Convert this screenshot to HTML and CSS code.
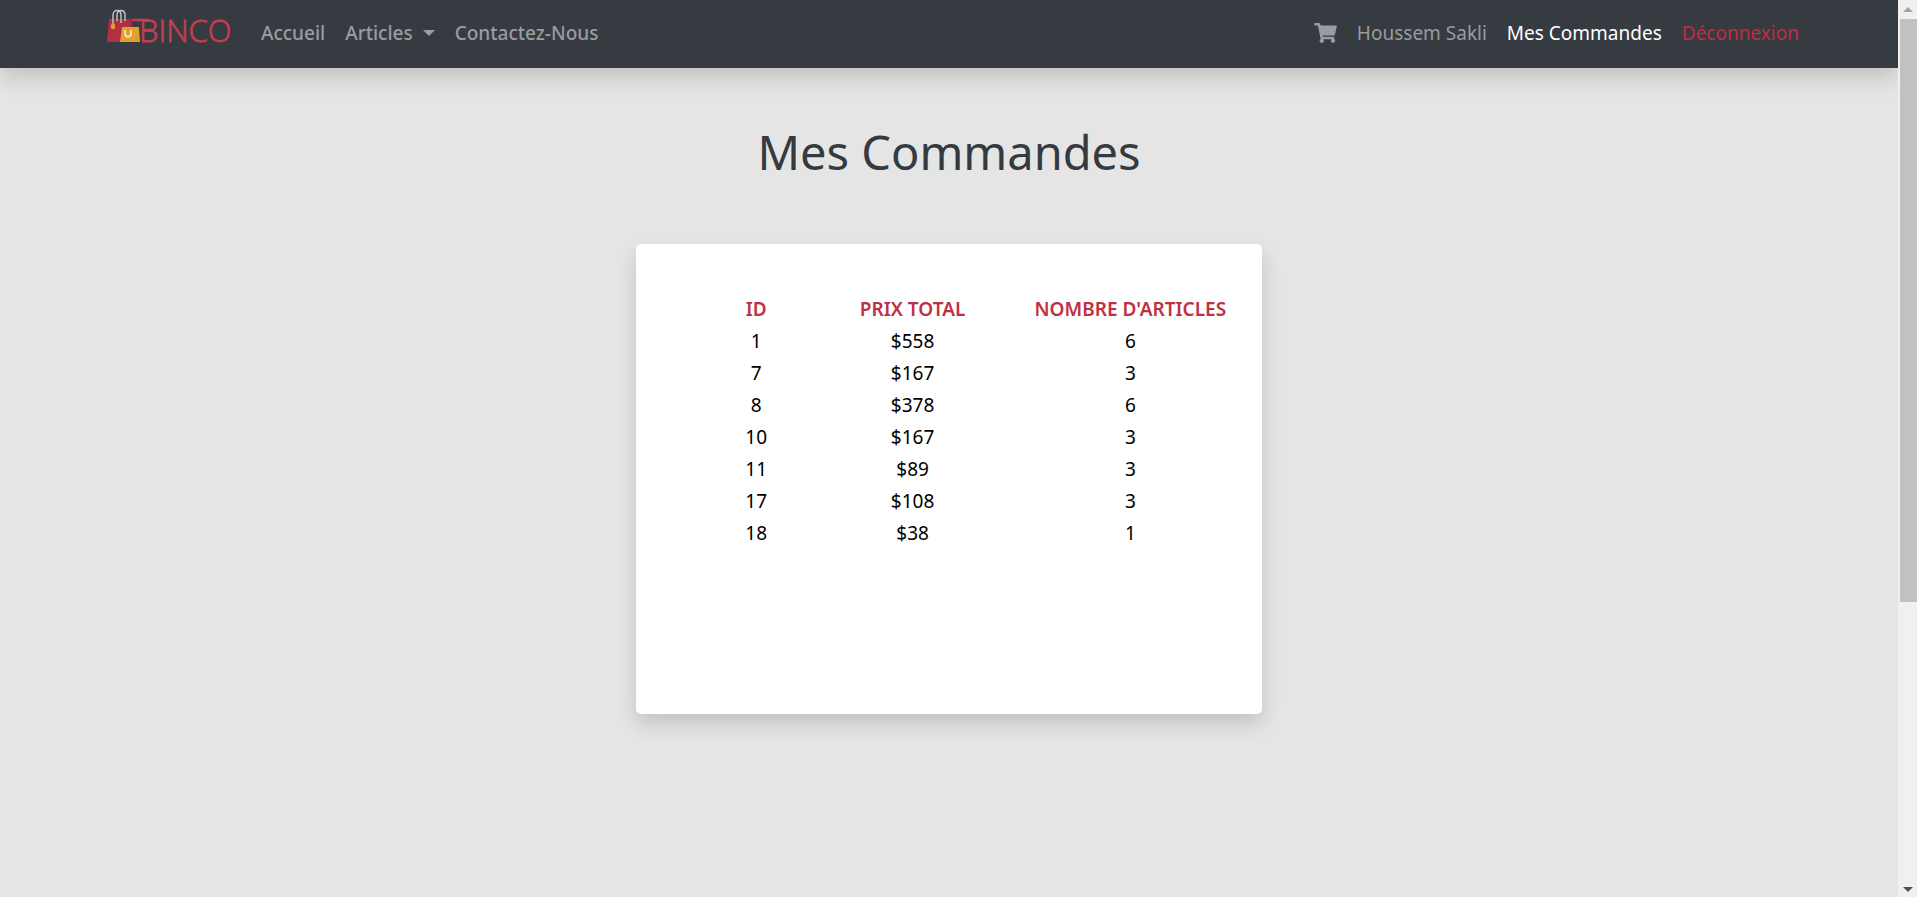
FILE: index.html
```html
<!DOCTYPE html>
<html lang="fr">
<head>
<meta charset="utf-8">
<title>Mes Commandes - Binco</title>
<link rel="stylesheet" href="styles.css">
</head>
<body>
<div class="page">
  <header class="navbar">
    <a class="brand" href="#" aria-label="Binco">
      <svg class="brand-logo" width="134" height="48" viewBox="0 0 134 48">
        <path class="bag-red" d="M2 11h22v23H0z"/>
        <path class="bag-stripe" d="M22 11v9M25 11v9"/>
        <path class="bag-handle" d="M6 16V7c0-6 8-6 8 0v8M10 13V7c0-6 8-6 8 0v6"/>
        <rect class="bag-yellow" x="4" y="16" width="4" height="5" rx="1"/>
        <path class="bag-yellow" d="M15 19h17l1 15H13z"/>
        <path class="bag-mark" d="M18 22v3c0 5 6 5 6 0v-3"/>
        <path class="brand-bar" d="M25 12h17M36 22h9"/>
        <text class="brand-text" x="32" y="34">BINCO</text>
      </svg>
    </a>
    <nav class="nav nav-main">
      <a class="nav-link" href="#">Accueil</a>
      <a class="nav-link" href="#">Articles<span class="caret"></span></a>
      <a class="nav-link" href="#">Contactez-Nous</a>
    </nav>
    <nav class="nav nav-user">
      <a class="nav-link cart-link" href="#" aria-label="Panier">
        <svg class="cart" width="23" height="20" viewBox="0 0 576 512"><path d="M528.12 301.319l47.273-208C578.806 78.301 567.391 64 551.99 64H159.208l-9.166-44.81C147.758 8.021 137.93 0 126.529 0H24C10.745 0 0 10.745 0 24v16c0 13.255 10.745 24 24 24h69.883l70.248 343.435C147.325 417.1 136 435.222 136 456c0 30.928 25.072 56 56 56s56-25.072 56-56c0-15.674-6.447-29.835-16.824-40h209.647C430.447 426.165 424 440.326 424 456c0 30.928 25.072 56 56 56s56-25.072 56-56c0-22.172-12.888-41.332-31.579-50.405l5.517-24.276c3.413-15.018-8.002-29.319-23.403-29.319H218.117l-6.545-32h293.145c11.206 0 20.92-7.754 23.403-18.681z"/></svg>
      </a>
      <a class="nav-link" href="#">Houssem Sakli</a>
      <a class="nav-link active" href="#">Mes Commandes</a>
      <a class="nav-link logout" href="#">Déconnexion</a>
    </nav>
  </header>
  <main class="content">
    <h1 class="title">Mes Commandes</h1>
    <section class="card">
      <table class="orders">
        <thead>
          <tr><th class="col-id">ID</th><th class="col-total">PRIX TOTAL</th><th class="col-count">NOMBRE D'ARTICLES</th></tr>
        </thead>
        <tbody>
          <tr><td>1</td><td>$558</td><td>6</td></tr>
          <tr><td>7</td><td>$167</td><td>3</td></tr>
          <tr><td>8</td><td>$378</td><td>6</td></tr>
          <tr><td>10</td><td>$167</td><td>3</td></tr>
          <tr><td>11</td><td>$89</td><td>3</td></tr>
          <tr><td>17</td><td>$108</td><td>3</td></tr>
          <tr><td>18</td><td>$38</td><td>1</td></tr>
        </tbody>
      </table>
    </section>
  </main>
</div>
<div class="scrollbar" aria-hidden="true">
  <span class="arrow arrow-up"></span>
  <div class="track"><div class="thumb"></div></div>
  <span class="arrow arrow-down"></span>
</div>
</body>
</html>
```

FILE: styles.css
```css
* {
  box-sizing: border-box;
}

body {
  margin: 0;
  height: 100vh;
  display: grid;
  grid-template-columns: 1fr 19px;
  overflow: hidden;
  background: #e5e5e5;
  color: #000;
  font-family: "Noto Sans", sans-serif;
  font-size: 19px;
  line-height: 30px;
}

.page {
  overflow: hidden;
}

.navbar {
  display: flex;
  align-items: center;
  height: 68px;
  padding: 0 89px 0 107px;
  background: #363a41;
  box-shadow: 0 10px 20px rgba(0, 0, 0, 0.15);
}

.brand {
  display: flex;
  margin-right: 10px;
  padding-bottom: 4px;
}

.bag-red {
  fill: #b52f42;
}

.bag-stripe {
  fill: none;
  stroke: #963244;
  stroke-width: 1;
}

.bag-handle,
.bag-mark {
  fill: none;
  stroke: #c3c5c8;
  stroke-width: 1.4;
}

.bag-mark {
  stroke: #f0e0b8;
  stroke-width: 2;
}

.bag-yellow {
  fill: #e2a02c;
}

.brand-bar {
  fill: none;
  stroke: #c63d50;
  stroke-width: 2.6;
}

.brand-text {
  fill: #c63d50;
  stroke: #c63d50;
  stroke-width: 0.8;
  font-family: "Open Sans", sans-serif;
  font-size: 31px;
  font-weight: 300;
}

.nav {
  display: flex;
  align-items: center;
}

.nav-main {
  font-weight: 500;
}

.nav-user {
  margin-left: auto;
}

.nav-link {
  display: flex;
  align-items: center;
  padding: 0 10px 2px;
  color: #9a9c9f;
  text-decoration: none;
}

.caret {
  margin-left: 10px;
  border: 6px solid transparent;
  border-top-color: currentColor;
  border-bottom: 0;
}

.cart {
  fill: currentColor;
}

.active {
  color: #fff;
}

.logout {
  color: #c22c43;
}

.content {
  display: flex;
  flex-direction: column;
  align-items: center;
  padding-top: 54px;
}

.title {
  margin: 0 0 62px;
  color: #343a40;
  font-size: 47px;
  font-weight: 400;
  line-height: 60px;
}

.card {
  width: 33%;
  min-height: 470px;
  padding: 49px 9px 49px 59px;
  border-radius: 5px;
  background: #fff;
  box-shadow: 0 10px 20px rgba(0, 0, 0, 0.15);
}

.orders {
  width: 100%;
  table-layout: fixed;
  border-collapse: collapse;
  text-align: center;
}

.orders th,
.orders td {
  padding: 1px 0;
}

.orders th {
  color: #bf3044;
  font-weight: 600;
}

.col-id {
  width: 22%;
}

.col-total {
  width: 34%;
}

.col-count {
  width: 44%;
}

.scrollbar {
  display: flex;
  flex-direction: column;
  align-items: center;
  padding: 7px 0 5px;
  background: #f0f0f0;
}

.track {
  flex: 1;
  width: 100%;
  padding: 7px 0 5px 2px;
}

.thumb {
  height: 67.5%;
  background: #c1c1c1;
}

.arrow {
  border: 5px solid transparent;
}

.arrow-up {
  border-top: 0;
  border-bottom-color: #a3a3a3;
}

.arrow-down {
  border-bottom: 0;
  border-top-color: #505050;
}
```
